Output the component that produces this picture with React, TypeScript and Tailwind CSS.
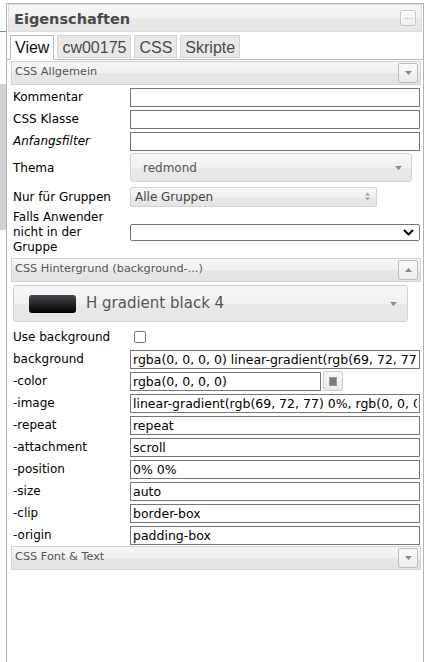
import React from "react";

const Tri = ({ up = false, color = "#888" }: { up?: boolean; color?: string }) => (
  <svg width="7" height="4" viewBox="0 0 7 4">
    <path d={up ? "M0 4 L3.5 0 L7 4Z" : "M0 0 L7 0 L3.5 4Z"} fill={color} />
  </svg>
);

function SectionBar({ title, up = false }: { title: string; up?: boolean }) {
  return (
    <div className="h-[24px] mx-[1px] flex items-start justify-between border border-[#d3d3d3] bg-[linear-gradient(#f5f5f5_0%,#f0f0f0_50%,#e7e7e7_51%,#e4e4e4_100%)] pl-[3px] pr-[2px]">
      <span className="text-[11.3px] leading-[13px] text-[#555] pt-[3px]">{title}</span>
      <div className="mt-[1px] w-[20px] h-[20px] border border-[#bdbdbd] rounded-[2px] bg-[linear-gradient(#fafafa,#ececec)] flex items-center justify-center">
        <Tri up={up} color="#8a8a8a" />
      </div>
    </div>
  );
}

function Row({ label, italic = false, children }: { label: string; italic?: boolean; children: React.ReactNode }) {
  return (
    <div className="h-[22px] flex items-center">
      <div className={`w-[120px] shrink-0 pl-[3px] text-[12px] text-black ${italic ? "italic" : ""}`}>{label}</div>
      {children}
    </div>
  );
}

function TextInput({ value = "", w = "w-[290px]" }: { value?: string; w?: string }) {
  return (
    <input
      readOnly
      defaultValue={value}
      className={`${w} h-[19px] border border-[#767676] bg-white px-[2px] text-[12.5px] text-black outline-none`}
    />
  );
}

export default function App() {
  const bgRows: [string, string][] = [
    ["-image", "linear-gradient(rgb(69, 72, 77) 0%, rgb(0, 0, 0) 100%)"],
    ["-repeat", "repeat"],
    ["-attachment", "scroll"],
    ["-position", "0% 0%"],
    ["-size", "auto"],
    ["-clip", "border-box"],
    ["-origin", "padding-box"],
  ];

  return (
    <div className="w-[427px] h-[662px] bg-white flex overflow-hidden font-['DejaVu_Sans',sans-serif]">
      {/* edge of the neighbouring pane */}
      <div className="w-[6px] shrink-0 flex flex-col">
        <div className="h-[32px] border-b border-[#8a8a8a]" />
        <div className="h-[52px]" />
        <div className="h-[146px] bg-[#d2d2d2]" />
      </div>

      {/* properties panel */}
      <div className="w-[418px] mt-[3px] border-l border-r border-t border-[#b3b3b3] flex flex-col">
        <div className="mx-[1px] h-[28px] border border-[#dcdcdc] bg-[linear-gradient(#f6f6f6_0%,#f1f1f1_50%,#e9e9e9_51%,#e6e6e6_100%)] flex items-start justify-between pl-[5px] pr-[5px]">
          <span className="pt-[6px] text-[14.5px] leading-[17px] font-bold text-[#4a4a4a]">Eigenschaften</span>
          <div className="mt-[5px] w-[16px] h-[16px] border border-[#c8c8c8] rounded-[2px] bg-[linear-gradient(#fafafa,#eeeeee)] flex items-center justify-center">
            <div className="w-[7px] border-t border-dotted border-[#b0b0b0]" />
          </div>
        </div>

        {/* tabs */}
        <div className="mt-[3px] pl-[3px] flex items-start gap-[3px] border-b border-[#b8b8b8] font-['Liberation_Sans',sans-serif] text-[16px] leading-[18px]">
          <div className="h-[25px] -mb-px px-[4px] pt-[3px] border border-[#b8b8b8] border-b-white bg-white text-[#111]">View</div>
          <div className="h-[23px] px-[4px] pt-[3px] border border-[#d3d3d3] bg-[#e8e8e8] text-[#4a4a4a]">cw00175</div>
          <div className="h-[23px] px-[4px] pt-[3px] border border-[#d3d3d3] bg-[#e8e8e8] text-[#4a4a4a]">CSS</div>
          <div className="h-[23px] px-[4px] pt-[3px] border border-[#d3d3d3] bg-[#e8e8e8] text-[#4a4a4a]">Skripte</div>
        </div>

        {/* tab content */}
        <div className="pl-[3px] pr-[1px] pt-[1px] flex flex-col">
          <SectionBar title="CSS Allgemein" />

          <div className="h-[1px]" />
          <Row label="Kommentar"><TextInput /></Row>
          <Row label="CSS Klasse"><TextInput /></Row>
          <Row label="Anfangsfilter" italic><TextInput /></Row>

          <div className="h-[31px] flex items-center">
            <div className="w-[120px] shrink-0 pl-[3px] text-[12px] text-black">Thema</div>
            <div className="w-[282px] h-[29px] border border-[#d3d3d3] rounded-[3px] bg-[linear-gradient(#f7f7f7_0%,#f1f1f1_50%,#e9e9e9_51%,#e6e6e6_100%)] flex items-center justify-between pl-[12px] pr-[9px]">
              <span className="text-[12px] text-[#555]">redmond</span>
              <Tri color="#8a8a8a" />
            </div>
          </div>

          <div className="h-[27px] flex items-center">
            <div className="w-[120px] shrink-0 pl-[3px] text-[12px] text-black">Nur für Gruppen</div>
            <div className="w-[247px] h-[20px] border border-[#d3d3d3] rounded-[2px] bg-[linear-gradient(#f5f5f5_0%,#f0f0f0_50%,#e8e8e8_51%,#e5e5e5_100%)] flex items-center justify-between pl-[4px] pr-[6px]">
              <span className="text-[12px] text-[#444]">Alle Gruppen</span>
              <svg width="5" height="9" viewBox="0 0 5 9">
                <path d="M0 3.5 L2.5 0.5 L5 3.5Z M0 5.5 L2.5 8.5 L5 5.5Z" fill="#a0a0a0" />
              </svg>
            </div>
          </div>

          <div className="h-[45px] flex items-center">
            <div className="w-[120px] shrink-0 pl-[3px] text-[12px] leading-[15px] text-black">
              Falls Anwender
              <br />
              nicht in der
              <br />
              Gruppe
            </div>
            <div className="w-[290px] h-[17px] border border-[#767676] rounded-[2px] bg-white flex items-center justify-end pr-[5px]">
              <svg width="11" height="7" viewBox="0 0 11 7">
                <path d="M1 1 L5.5 5.5 L10 1" fill="none" stroke="#000" strokeWidth="2" />
              </svg>
            </div>
          </div>

          <div className="h-[3px]" />
          <SectionBar title="CSS Hintergrund (background-...)" up />

          <div className="mt-[3px] ml-[3px] w-[395px] h-[37px] border border-[#d3d3d3] rounded-[3px] bg-[linear-gradient(#f7f7f7_0%,#f1f1f1_50%,#e9e9e9_51%,#e6e6e6_100%)] flex items-center justify-between pl-[15px] pr-[10px]">
            <div className="flex items-center gap-[10px]">
              <div className="w-[47px] h-[18px] rounded-[3px] bg-[linear-gradient(#45484d,#000000)]" />
              <span className="text-[15px] text-[#555]">H gradient black 4</span>
            </div>
            <Tri color="#8a8a8a" />
          </div>

          <div className="h-[4px]" />
          <Row label="Use background">
            <div className="ml-[4px] w-[12px] h-[12px] border border-[#767676] rounded-[2px] bg-white" />
          </Row>
          <Row label="background">
            <TextInput value="rgba(0, 0, 0, 0) linear-gradient(rgb(69, 72, 77) 0%, rgb(0, 0, 0) 100%) repeat scroll 0% 0% / auto padding-box border-box" />
          </Row>
          <Row label="-color">
            <TextInput value="rgba(0, 0, 0, 0)" w="w-[191px]" />
            <div className="ml-[2px] w-[20px] h-[20px] border border-[#c8c8c8] rounded-[2px] bg-[linear-gradient(#f7f7f7,#e9e9e9)] flex items-center justify-center">
              <div className="w-[8px] h-[9px] bg-[#7a7a7a] border border-[#9a9a9a]" />
            </div>
          </Row>
          {bgRows.map(([label, value]) => (
            <Row key={label} label={label}>
              <TextInput value={value} />
            </Row>
          ))}

          <SectionBar title="CSS Font & Text" />
        </div>
      </div>
    </div>
  );
}
